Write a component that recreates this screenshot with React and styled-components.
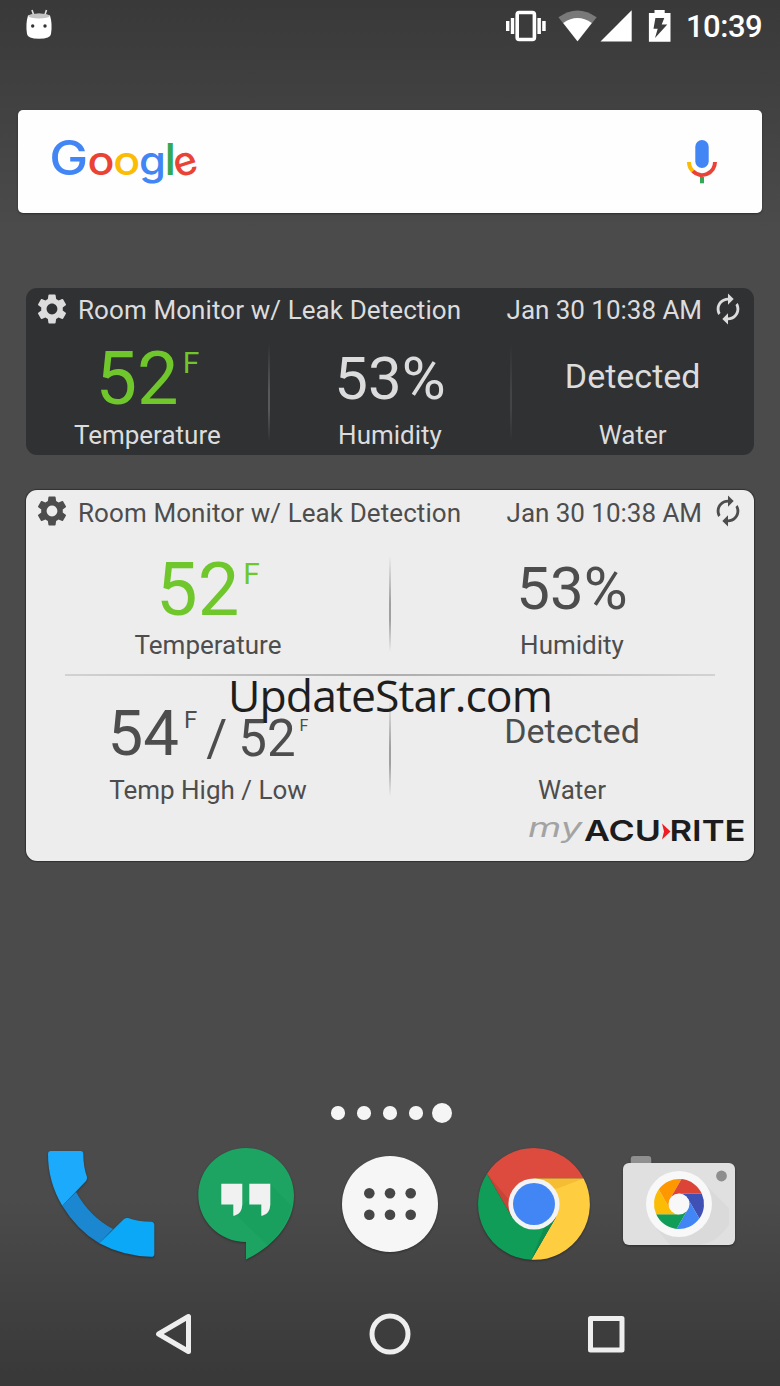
import React from "react";
import styled, { createGlobalStyle } from "styled-components";
import { MdSettings, MdAutorenew } from "react-icons/md";

const GlobalStyle = createGlobalStyle`
  * {
    box-sizing: border-box;
  }
  body {
    margin: 0;
    background: #4b4b4b;
    font-family: Roboto, "Liberation Sans", sans-serif;
  }
  svg {
    display: block;
    flex: none;
    overflow: visible;
  }
`;

const Screen = styled.div`
  position: relative;
  display: flex;
  flex-direction: column;
  width: 780px;
  height: 1386px;
  overflow: hidden;
  background: linear-gradient(
    #393939 0,
    #3c3c3c 40px,
    #4b4b4b 230px,
    #4b4b4b 1200px,
    #3c3c3c 1345px,
    #383838 1386px
  );
`;

const StatusBar = styled.div`
  display: flex;
  align-items: center;
  height: 52px;
  padding: 0 17px 0 26px;
`;
const AndroidSlot = styled.div`
  padding-bottom: 4px;
`;
const StatusIcons = styled.div`
  display: flex;
  align-items: center;
  margin-left: auto;
`;
const Clock = styled.div`
  width: 77px;
  margin-left: 15px;
  color: #fff;
  font-size: 31px;
  font-weight: 500;
  line-height: 52px;
  padding-top: 2px;
  letter-spacing: -0.5px;
  white-space: nowrap;
`;

const SearchBar = styled.div`
  display: flex;
  align-items: center;
  justify-content: space-between;
  height: 103px;
  margin: 58px 18px 0;
  padding: 0 45px 0 30px;
  border-radius: 5px;
  background: #fefefe;
  box-shadow: 0 1px 2px rgba(0, 0, 0, 0.4);
`;

const Widget = styled.section`
  display: flex;
  flex-direction: column;
  margin: ${(p) => p.$top}px 26px 0;
  height: ${(p) => p.$height}px;
  border-radius: 11px;
  color: ${(p) => (p.$dark ? "#dcdcdd" : "#4d4d4d")};
  background: ${(p) => (p.$dark ? "#303133" : "#ededed")};
  box-shadow: ${(p) => (p.$dark ? "none" : "0 0 1px 1px rgba(0, 0, 0, 0.35)")};
`;
const WidgetHeader = styled.header`
  display: flex;
  align-items: center;
  height: 45px;
  padding: 0 9px 0 8px;
  font-size: 26px;
  line-height: 45px;
  white-space: nowrap;
  > svg {
    margin-bottom: 3px;
  }
`;
const WidgetTitle = styled.div`
  margin-left: 8px;
  padding-top: ${(p) => p.$shift || 0}px;
  letter-spacing: 0.09px;
`;
const WidgetTime = styled.div`
  margin-left: auto;
  margin-right: 9px;
  padding-top: ${(p) => p.$shift || 0}px;
  letter-spacing: -0.03px;
`;
const Metrics = styled.div`
  display: grid;
  grid-template-columns: repeat(${(p) => p.$columns}, 1fr);
  padding-top: ${(p) => p.$top}px;
`;
const Metric = styled.div`
  display: flex;
  flex-direction: column;
  align-items: center;
  margin-right: -1px;
  padding-left: 1px;
  border: solid transparent;
  border-width: 0 2px 0 0;
  border-image: ${(p) =>
      p.$divider
        ? `linear-gradient(transparent 10%, ${p.$divider} 50%, ${p.$divider} 65%, transparent 92%)`
        : "none"}
    1;
`;
const Value = styled.div`
  display: flex;
  height: ${(p) => p.$height || 87}px;
  color: ${(p) => p.$color || "inherit"};
  font-size: ${(p) => p.$size}px;
  line-height: ${(p) => p.$line || 90}px;
  white-space: nowrap;
`;
const Unit = styled.span`
  align-self: flex-start;
  margin: ${(p) => p.$top}px 0 0 ${(p) => p.$gap}px;
  font-size: ${(p) => p.$size}px;
  line-height: 30px;
`;
const Low = styled.span`
  margin-left: ${(p) => p.$gap}px;
  font-size: 51px;
  line-height: 101px;
`;
const Label = styled.div`
  font-size: 26px;
  line-height: 30px;
`;
const Rule = styled.hr`
  width: 650px;
  height: 2px;
  margin: 14px auto 0;
  border: 0;
  background: linear-gradient(90deg, #d2d2d2, #aeaeae 50%, #d2d2d2);
`;
const BrandRow = styled.div`
  display: flex;
  justify-content: flex-end;
  padding: 10px 9px 0 0;
`;

const Watermark = styled.div`
  position: absolute;
  top: 664px;
  left: 0;
  width: 100%;
  color: #1e1e1e;
  font-family: "Open Sans", "Noto Sans", sans-serif;
  font-size: 44.5px;
  line-height: 62px;
  letter-spacing: -0.9px;
  text-align: center;
  white-space: nowrap;
`;

const Pager = styled.div`
  display: flex;
  align-items: center;
  justify-content: center;
  height: 20px;
  margin-top: auto;
  padding-left: 3px;
  gap: 12.5px;
`;
const Dot = styled.span`
  width: ${(p) => (p.$active ? 20 : 13.5)}px;
  height: ${(p) => (p.$active ? 20 : 13.5)}px;
  margin-left: ${(p) => (p.$active ? -3.5 : 0)}px;
  border-radius: 50%;
  background: #f5f5f5;
`;
const Dock = styled.div`
  display: grid;
  grid-template-columns: repeat(5, 144.4px);
  justify-content: center;
  justify-items: center;
  margin-top: 25px;
  svg {
    filter: drop-shadow(0 1px 1px rgba(0, 0, 0, 0.35));
  }
`;
const NavBar = styled.nav`
  display: grid;
  grid-template-columns: repeat(3, 216px);
  justify-content: center;
  justify-items: center;
  margin-top: 52px;
  margin-bottom: 30px;
`;

const AndroidIcon = () => (
  <svg width="26" height="32" viewBox="26 8 26 32">
    <path d="M32 10l2 6M46.500 10l-2 6" stroke="#ddd" strokeWidth="1.6" />
    <path
      d="M28 15.500Q39 12 50 15.500Q52.600 24 51 34Q50.500 38.500 39 38.800Q27.500 38.500 27 34Q25.400 24 28 15.500Z"
      fill="#fff"
    />
    <ellipse cx="39" cy="16" rx="10.600" ry="2.400" fill="#c4c4c4" />
    <circle cx="32.700" cy="26" r="1.700" fill="#333" />
    <circle cx="45" cy="26" r="1.700" fill="#333" />
  </svg>
);

const StatusGlyphs = () => (
  <svg width="165" height="32" viewBox="506 10 165 32" fill="#fff">
    <rect x="517.2" y="12.500" width="17.200" height="27" rx="2" fill="none" stroke="#fff" strokeWidth="3.600" />
    <path d="M506 21h3.400v10H506zM510.800 18h3.400v16h-3.400zM537.400 18h3.500v16h-3.500zM542.200 21h3.500v10h-3.500z" />
    <path d="M577.500 41.500L558.400 17.300Q577.500 3.500 596.700 17.300Z" opacity=".32" />
    <path d="M577.500 41.300L563.200 23Q577.500 13 591.800 23Z" />
    <path d="M600.500 41.400L631.700 10.200V41.400Z" />
    <path d="M654.500 10h10.200v3h5.800v28.800h-21.600V13h5.600z" />
    <path d="M655.400 18h8.900l-2.600 6.600h5.600L655 38l2.700-9.300h-4.200z" fill="#3d3d3d" />
  </svg>
);

// [letter, x, width, size, colour]
const googleLetters = [
  ["G", 1.200, 39, 47.500, "#4285f4"],
  ["o", 39.500, 27, 40.500, "#ea4335"],
  ["o", 65.300, 27, 40.500, "#fbbc05"],
  ["g", 91, 27, 40.500, "#4285f4"],
  ["l", 116.600, 11.500, 43.500, "#34a853"]
];

const GoogleLogo = () => (
  <svg width="156" height="60" viewBox="0 0 156 60" fontFamily="Inter, Roboto, sans-serif" fontWeight="500">
    {googleLetters.map(([letter, x, width, size, color]) => (
      <text
        key={x}
        x={x}
        y="43"
        textLength={width}
        lengthAdjust="spacingAndGlyphs"
        fontSize={size}
        fill={color}
      >
        {letter}
      </text>
    ))}
    <text transform="translate(129.500 46.200) rotate(-18)" fontSize="40.500" fill="#ea4335">
      e
    </text>
  </svg>
);

const MicIcon = () => (
  <svg width="30" height="44" viewBox="687 140 30 44">
    <rect x="695.300" y="140" width="13.400" height="28" rx="6.700" fill="#4285f4" />
    <path d="M689 162A13 13 0 0 0 692.800 171.200" fill="none" stroke="#fbbc05" strokeWidth="4" />
    <path d="M692.800 171.200A13 13 0 0 0 715 162" fill="none" stroke="#ea4335" strokeWidth="4" />
    <path d="M700 177h4v6.300h-4z" fill="#34a853" />
  </svg>
);

const BrandLogo = () => (
  <svg width="217" height="30" viewBox="528 815 217 30" fontFamily="Inter, Roboto, sans-serif">
    <text
      x="528"
      y="836.500"
      fontSize="27"
      fontStyle="italic"
      fontWeight="400"
      fill="#a3a3a3"
      textLength="54"
      lengthAdjust="spacingAndGlyphs"
    >
      my
    </text>
    <text x="584" y="841" fontSize="29" fontWeight="600" fill="#1c1c1e" textLength="77" lengthAdjust="spacingAndGlyphs">
      ACU
    </text>
    <path d="M662 823.500L670.500 831.500L662 839.500L664 831.500Z" fill="#ee1c25" />
    <text x="669.500" y="841" fontSize="29" fontWeight="600" fill="#1c1c1e" textLength="76" lengthAdjust="spacingAndGlyphs">
      RITE
    </text>
  </svg>
);

const DockIcon = ({ children }) => (
  <svg width="112" height="112" viewBox="-56 -56 112 112">
    {children}
  </svg>
);

const PhoneIcon = () => (
  <DockIcon>
    <g transform="translate(-53 -54)">
      <path d="M14.300 55.700L28 42Q42 67 65 79L51.300 93.300Q29 80 14.300 55.700Z" fill="#1b87d0" />
      <path
        d="M3 1H32.500Q35.300 1 35.300 4Q35.300 17 39 27Q39.300 29.500 38 31L14.300 55.700Q0 32 0 4Q0 1 3 1Z"
        fill="#1caafc"
      />
      <path
        d="M51.300 93.300L75.500 69.500Q77 67.500 80 68Q89 71.600 103 71.700Q106.300 72 106.300 75V104Q106.300 107 103 106.800Q75 106 51.300 93.300Z"
        fill="#0ba8f8"
      />
    </g>
  </DockIcon>
);

const HangoutsIcon = () => (
  <DockIcon>
    <g transform="translate(-47.700 -56)">
      <path
        d="M47.700 0C21.400 0 0 21 0 47S21.400 94 47.700 94V111.500C74 99 95.700 76 95.700 47.500C95.700 21 74 0 47.700 0Z"
        fill="#1da462"
      />
      <path d="M72 36L93 58Q88 80 69 97L35 64Z" fill="#0c8f4e" opacity=".2" />
      <path d="M23 35.700h21v21Q43.500 66 36 67.700h-1V56.400H23zM51 35.700h21v21Q71.500 66 64 67.700h-1V56.400H51z" fill="#f1f1f1" />
    </g>
  </DockIcon>
);

const AppsIcon = () => (
  <DockIcon>
    <circle r="48" fill="#f6f6f6" />
    {[-10.800, 10.800].map((y) =>
      [-20.700, 0, 20.700].map((x) => <circle key={x} cx={x} cy={y} r="5.300" fill="#464646" />)
    )}
  </DockIcon>
);

const ChromeIcon = () => (
  <DockIcon>
    <path d="M-47 -30.200A55.800 55.800 0 0 1 49.600 -25.600H0L-22.200 12.800Z" fill="#dc4b3e" />
    <path d="M49.600 -25.600A55.800 55.800 0 0 1 -2.600 55.800L22.200 12.800L0 -25.600Z" fill="#ffcd40" />
    <path d="M-2.600 55.800A55.800 55.800 0 0 1 -47 -30.200L-22.200 12.800L22.200 12.800Z" fill="#0f9d58" />
    <path d="M0 -25.600H49.600L22 -15Z" fill="#e8a925" opacity=".45" />
    <path d="M-47 -30.200L-22.200 12.800L-25 -4Z" fill="#a83a2c" opacity=".4" />
    <path d="M22.200 12.800L-2.600 55.800L10 24Z" fill="#0a7440" opacity=".4" />
    <circle r="25.600" fill="#f3f3f3" />
    <circle r="21" fill="#4285f4" />
  </DockIcon>
);

const bladeColors = ["#3f51b5", "#4285f4", "#109d58", "#fbbc05", "#ff9800", "#db4437"];

// rotate a point by k sixths of a turn
const turn = (x, y, k) => {
  const a = (k * Math.PI) / 3;
  return `${(x * Math.cos(a) - y * Math.sin(a)).toFixed(2)} ${(x * Math.sin(a) + y * Math.cos(a)).toFixed(2)}`;
};

const CameraIcon = () => (
  <DockIcon>
    <rect x="-48.300" y="-48" width="20.600" height="12" rx="3" fill="#8f8f8f" />
    <rect x="-56" y="-41" width="112" height="82" rx="6" fill="#e0e0e0" />
    <path d="M23 -23L50 4V20Q40 38 20 41H-9L-23 24Z" fill="#cfcfcf" opacity=".35" />
    <circle cx="42.500" cy="-28" r="5.400" fill="#8e8e8e" />
    <circle r="33" fill="#f8f8f8" />
    {bladeColors.map((color, k) => (
      <path
        key={color}
        d={`M${turn(22.800, -10.300, k)}A25 25 0 0 1 ${turn(22.800, -10.300, k + 1)}L${turn(0, -10.300, k + 1)}L${turn(0, -10.300, k)}Z`}
        fill={color}
      />
    ))}
    <circle r="10.500" fill="#f8f8f8" />
  </DockIcon>
);

const NavIcon = ({ children }) => (
  <svg width="44" height="44" viewBox="-22 -22 44 44" fill="none" stroke="#eee" strokeWidth="5" strokeLinejoin="round">
    {children}
  </svg>
);

const Header = ({ shift }) => (
  <WidgetHeader>
    <MdSettings size={36} />
    <WidgetTitle $shift={shift}>Room Monitor w/ Leak Detection</WidgetTitle>
    <WidgetTime $shift={shift}>Jan 30 10:38 AM</WidgetTime>
    <MdAutorenew size={34} />
  </WidgetHeader>
);

const GREEN = "#6fc72c";

function App() {
  return (
    <>
      <GlobalStyle />
      <Screen>
        <StatusBar>
          <AndroidSlot>
            <AndroidIcon />
          </AndroidSlot>
          <StatusIcons>
            <StatusGlyphs />
            <Clock>10:39</Clock>
          </StatusIcons>
        </StatusBar>
        <SearchBar>
          <GoogleLogo />
          <MicIcon />
        </SearchBar>

        <Widget $dark $top={75} $height={167}>
          <Header />
          <Metrics $columns={3}>
            <Metric $divider="#58595b">
              <Value $size={74} $color={GREEN} $line={92}>
                52<Unit $size={30} $top={15} $gap={4}>F</Unit>
              </Value>
              <Label>Temperature</Label>
            </Metric>
            <Metric $divider="#434446">
              <Value $size={60} $line={92}>53%</Value>
              <Label>Humidity</Label>
            </Metric>
            <Metric>
              <Value $size={34} $line={87}>Detected</Value>
              <Label>Water</Label>
            </Metric>
          </Metrics>
        </Widget>

        <Widget $top={35} $height={371}>
          <Header shift={2} />
          <Metrics $columns={2} $top={10}>
            <Metric $divider="#a0a0a0">
              <Value $size={74} $color={GREEN} $height={85}>
                52<Unit $size={30} $top={14} $gap={4}>F</Unit>
              </Value>
              <Label>Temperature</Label>
            </Metric>
            <Metric>
              <Value $size={60} $height={85} $line={88}>53%</Value>
              <Label>Humidity</Label>
            </Metric>
          </Metrics>
          <Rule />
          <Metrics $columns={2} $top={12}>
            <Metric $divider="#a0a0a0">
              <Value $size={63.5} $line={91}>
                54<Unit $size={24} $top={17} $gap={5}>F</Unit>
                <Low $gap={9}>/</Low>
                <Low $gap={11}>52</Low>
                <Unit $size={16} $top={23} $gap={4}>F</Unit>
              </Value>
              <Label>Temp High / Low</Label>
            </Metric>
            <Metric>
              <Value $size={34} $line={86}>Detected</Value>
              <Label>Water</Label>
            </Metric>
          </Metrics>
          <BrandRow>
            <BrandLogo />
          </BrandRow>
        </Widget>

        <Watermark>UpdateStar.com</Watermark>

        <Pager>
          <Dot />
          <Dot />
          <Dot />
          <Dot />
          <Dot $active />
        </Pager>
        <Dock>
          <PhoneIcon />
          <HangoutsIcon />
          <AppsIcon />
          <ChromeIcon />
          <CameraIcon />
        </Dock>
        <NavBar>
          <NavIcon>
            <path d="M-15.400 0L14.500 -17.500V17.500Z" />
          </NavIcon>
          <NavIcon>
            <circle r="18" />
          </NavIcon>
          <NavIcon>
            <rect x="-15.500" y="-15.500" width="31.500" height="31.500" />
          </NavIcon>
        </NavBar>
      </Screen>
    </>
  );
}

export default App;
